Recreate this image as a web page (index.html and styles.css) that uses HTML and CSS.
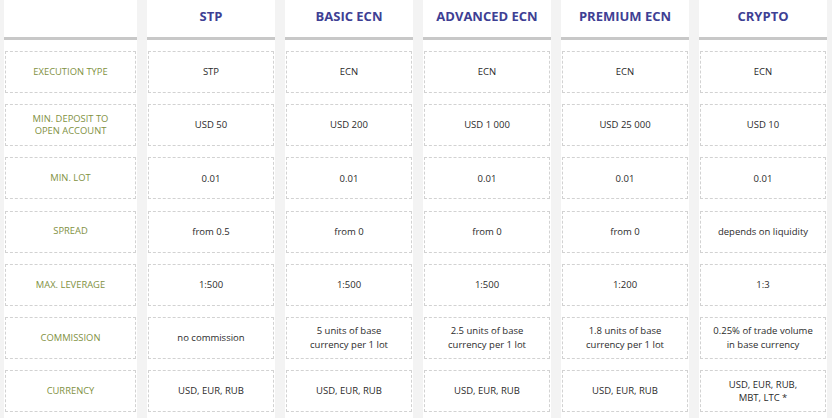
FILE: index.html
```html
<!DOCTYPE html>
<html>
<head>
<meta charset="utf-8">
<link rel="stylesheet" href="styles.css">
</head>
<body>
<div class="table">
  <div class="col col-label">
    <div class="head"></div>
    <div class="cell label">EXECUTION TYPE</div>
    <div class="cell label">MIN. DEPOSIT TO<br>OPEN ACCOUNT</div>
    <div class="cell label">MIN. LOT</div>
    <div class="cell label">SPREAD</div>
    <div class="cell label">MAX. LEVERAGE</div>
    <div class="cell label">COMMISSION</div>
    <div class="cell label">CURRENCY</div>
  </div>
  <div class="col">
    <div class="head">STP</div>
    <div class="cell">STP</div>
    <div class="cell">USD 50</div>
    <div class="cell">0.01</div>
    <div class="cell">from 0.5</div>
    <div class="cell">1:500</div>
    <div class="cell">no commission</div>
    <div class="cell">USD, EUR, RUB</div>
  </div>
  <div class="col">
    <div class="head">BASIC ECN</div>
    <div class="cell">ECN</div>
    <div class="cell">USD 200</div>
    <div class="cell">0.01</div>
    <div class="cell">from 0</div>
    <div class="cell">1:500</div>
    <div class="cell">5 units of base<br>currency per 1 lot</div>
    <div class="cell">USD, EUR, RUB</div>
  </div>
  <div class="col">
    <div class="head">ADVANCED ECN</div>
    <div class="cell">ECN</div>
    <div class="cell">USD 1 000</div>
    <div class="cell">0.01</div>
    <div class="cell">from 0</div>
    <div class="cell">1:500</div>
    <div class="cell">2.5 units of base<br>currency per 1 lot</div>
    <div class="cell">USD, EUR, RUB</div>
  </div>
  <div class="col">
    <div class="head">PREMIUM ECN</div>
    <div class="cell">ECN</div>
    <div class="cell">USD 25 000</div>
    <div class="cell">0.01</div>
    <div class="cell">from 0</div>
    <div class="cell">1:200</div>
    <div class="cell">1.8 units of base<br>currency per 1 lot</div>
    <div class="cell">USD, EUR, RUB</div>
  </div>
  <div class="col">
    <div class="head">CRYPTO</div>
    <div class="cell">ECN</div>
    <div class="cell">USD 10</div>
    <div class="cell">0.01</div>
    <div class="cell">depends on liquidity</div>
    <div class="cell">1:3</div>
    <div class="cell">0.25% of trade volume<br>in base currency</div>
    <div class="cell">USD, EUR, RUB,<br>MBT, LTC *</div>
  </div>
</div>
</body>
</html>
```
FILE: styles.css
```css
html, body {
  margin: 0;
  padding: 0;
}
body {
  background: #f3f3f3;
  font-family: "Open Sans", "Liberation Sans", sans-serif;
  width: 832px;
  height: 418px;
  overflow: hidden;
}
.table {
  display: flex;
  gap: 10px;
  padding-left: 4px;
}
.col {
  width: 128px;
  background: #fff;
  display: flex;
  flex-direction: column;
}
.col-label {
  width: 133px;
}
.head {
  height: 40px;
  border-bottom: 3px solid #c8c8c8;
  margin-bottom: 11px;
  display: flex;
  align-items: center;
  justify-content: center;
  font-weight: 700;
  font-size: 13px;
  color: #3e3f94;
  padding-bottom: 5px;
  box-sizing: border-box;
}
.cell {
  height: 42px;
  margin: 0 1px 11.2px;
  border: 1px dashed #d2d2d2;
  box-sizing: border-box;
  display: flex;
  align-items: center;
  justify-content: center;
  text-align: center;
  font-size: 9.5px;
  line-height: 13.5px;
  color: #2b2b2b;
}
.label {
  color: #7f913f;
  font-size: 9.4px;
  line-height: 12.5px;
}
```
